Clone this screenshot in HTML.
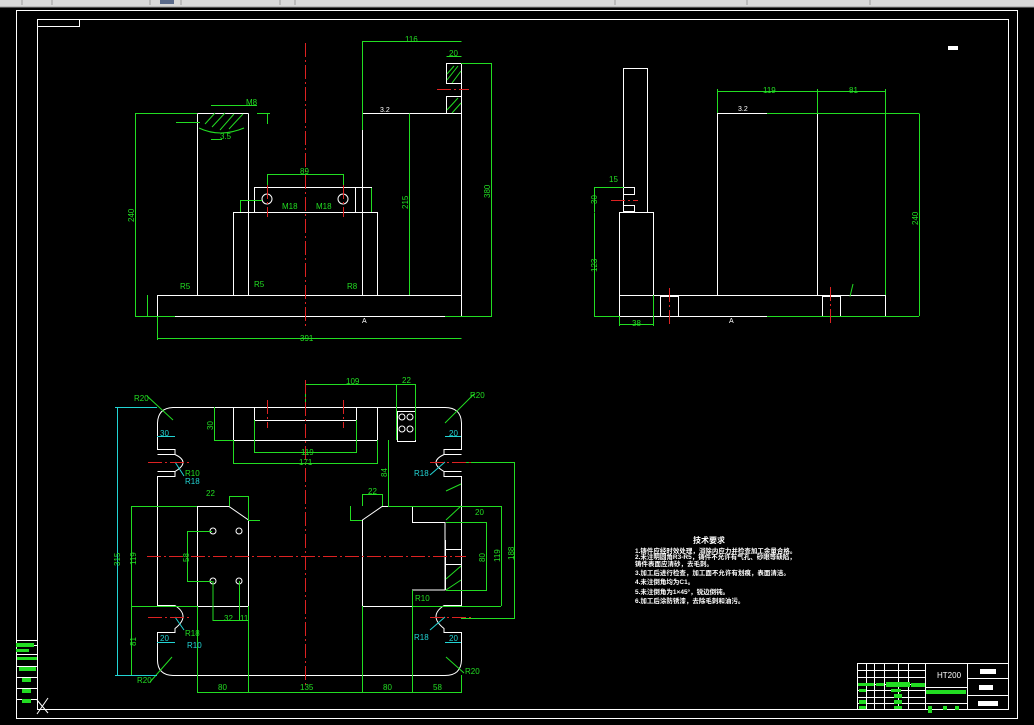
<!DOCTYPE html>
<html><head><meta charset="utf-8"><style>
html,body{margin:0;padding:0;background:#000;width:1034px;height:725px;overflow:hidden}
svg{display:block}
text{font-family:"Liberation Sans","Noto Sans CJK SC",sans-serif}
</style></head><body>
<svg width="1034" height="725" viewBox="0 0 1034 725" xmlns="http://www.w3.org/2000/svg">
<rect x="0" y="0" width="1034" height="7" fill="#d8d8d8"/>
<g stroke="#9a9a9a" stroke-width="1" fill="none">
<line x1="0" y1="7" x2="1034" y2="7"/>
<line x1="22" y1="0" x2="22" y2="5"/><line x1="52" y1="0" x2="52" y2="5"/>
<line x1="150" y1="0" x2="150" y2="5"/><line x1="181" y1="0" x2="181" y2="5"/>
<line x1="280" y1="0" x2="280" y2="5"/><line x1="295" y1="0" x2="295" y2="5"/>
<line x1="615" y1="0" x2="615" y2="5"/><line x1="747" y1="0" x2="747" y2="5"/>
<line x1="870" y1="0" x2="870" y2="5"/>
</g>
<rect x="160" y="0" width="14" height="4" fill="#5a6a8a"/>
<g stroke="#fff" stroke-width="1" fill="none">
<rect x="16.5" y="10.5" width="1001" height="708"/>
<rect x="37.5" y="19.5" width="971" height="690"/>
<rect x="37.5" y="19.5" width="42" height="7"/>
<rect x="157.5" y="295.5" width="304" height="21"/>
<line x1="197.5" y1="113.5" x2="197.5" y2="295"/>
<line x1="248.5" y1="113.5" x2="248.5" y2="295"/>
<line x1="197.5" y1="113.5" x2="248.5" y2="113.5"/>
<rect x="233.5" y="212.5" width="144" height="83"/>
<rect x="254.5" y="187.5" width="117" height="25"/>
<line x1="355.5" y1="187.5" x2="355.5" y2="212.5"/>
<line x1="362.5" y1="113.5" x2="362.5" y2="295"/>
<line x1="362.5" y1="113.5" x2="446.5" y2="113.5"/>
<line x1="461.5" y1="63.5" x2="461.5" y2="295"/>
<rect x="446.5" y="63.5" width="15" height="20"/>
<rect x="446.5" y="96.5" width="15" height="17"/>
<circle cx="267" cy="199" r="5"/><circle cx="343" cy="199" r="5"/>
<rect x="623.5" y="68.5" width="24" height="144"/>
<rect x="619.5" y="212.5" width="34" height="83"/>
<rect x="619.5" y="295.5" width="266" height="21"/>
<rect x="717.5" y="113.5" width="168" height="182"/>
<line x1="817.5" y1="113.5" x2="817.5" y2="295"/>
<rect x="660.5" y="296.5" width="18" height="20"/>
<rect x="822.5" y="296.5" width="18" height="20"/>
<rect x="623.5" y="187.5" width="11" height="7"/><rect x="623.5" y="205.5" width="11" height="6"/>
<path d="M173,407.5 H445 Q461,407.5 461.5,423 V449.5 H444 V454.5 H444 Q428,462 444,471.5 V476.5 H461.5 V605.5 H444 Q428,616 444,628.5 V632.5 H461.5 V660 Q461,675.5 445,675.5 H173 Q157.5,675 157.5,660 V632.5 H175 V628.5 Q191,616 175,605.5 H157.5 V476.5 H175 V471.5 Q191,462 175,454.5 V449.5 H157.5 V423 Q158,408 173,407.5Z"/>
<line x1="157.5" y1="454.5" x2="175" y2="454.5"/><line x1="157.5" y1="471.5" x2="175" y2="471.5"/>
<line x1="444" y1="454.5" x2="461.5" y2="454.5"/><line x1="444" y1="471.5" x2="461.5" y2="471.5"/>
<rect x="233.5" y="407.5" width="144" height="33"/>
<line x1="254.5" y1="420.5" x2="356.5" y2="420.5"/>
<line x1="254.5" y1="407.5" x2="254.5" y2="420.5"/><line x1="356.5" y1="407.5" x2="356.5" y2="420.5"/>
<rect x="397.5" y="411.5" width="18" height="30"/>
<path d="M197.5,506.5 H229 L248.5,520 V606.5 H197.5Z"/>
<path d="M412.5,506.5 H461.5 M412.5,506.5 V522.5 H445 V590 H412.5 V606.5 H362.5 V520 L382,506.5 H412.5"/>
<line x1="445.5" y1="540" x2="445.5" y2="590"/>
<line x1="445" y1="549.5" x2="461" y2="549.5"/><line x1="445" y1="564.5" x2="461" y2="564.5"/>
<circle cx="213" cy="531" r="3"/><circle cx="239" cy="531" r="3"/><circle cx="213" cy="581" r="3"/><circle cx="239" cy="581" r="3"/>
<circle cx="402" cy="417" r="3"/><circle cx="410" cy="417" r="3"/><circle cx="402" cy="429" r="3"/><circle cx="410" cy="429" r="3"/>
<rect x="857.5" y="663.5" width="151" height="46"/>
<line x1="925.5" y1="663.5" x2="925.5" y2="710"/><line x1="967.5" y1="663.5" x2="967.5" y2="710"/>
<line x1="967.5" y1="678.5" x2="1009" y2="678.5"/><line x1="967.5" y1="695.5" x2="1009" y2="695.5"/>
<line x1="925.5" y1="687.5" x2="967.5" y2="687.5"/><line x1="925.5" y1="703.5" x2="967.5" y2="703.5"/>
<line x1="857.5" y1="670.5" x2="925.5" y2="670.5"/><line x1="857.5" y1="677.5" x2="925.5" y2="677.5"/>
<line x1="857.5" y1="684.5" x2="925.5" y2="684.5"/><line x1="857.5" y1="690.5" x2="925.5" y2="690.5"/>
<line x1="857.5" y1="697.5" x2="925.5" y2="697.5"/><line x1="857.5" y1="703.5" x2="925.5" y2="703.5"/>
<line x1="866.5" y1="663.5" x2="866.5" y2="710"/><line x1="874.5" y1="663.5" x2="874.5" y2="710"/>
<line x1="884.5" y1="663.5" x2="884.5" y2="710"/><line x1="898.5" y1="663.5" x2="898.5" y2="710"/>
<line x1="908.5" y1="663.5" x2="908.5" y2="710"/>
<line x1="37.5" y1="640" x2="37.5" y2="710"/>
<line x1="16" y1="640.5" x2="37" y2="640.5"/><line x1="16" y1="645.5" x2="37" y2="645.5"/>
<line x1="16" y1="654.5" x2="37" y2="654.5"/><line x1="16" y1="666.5" x2="37" y2="666.5"/>
<line x1="16" y1="677.5" x2="37" y2="677.5"/><line x1="16" y1="688.5" x2="37" y2="688.5"/>
<line x1="16" y1="699.5" x2="37" y2="699.5"/>
<line x1="37" y1="700" x2="48" y2="713"/><line x1="48" y1="698" x2="37" y2="714"/>
</g>
<g fill="#fff"><rect x="980" y="669" width="16" height="5"/><rect x="979" y="685" width="14" height="5"/><rect x="978" y="701" width="20" height="5"/><rect x="948" y="46" width="10" height="4"/></g>
<g fill="#22dd22">
<rect x="858" y="683" width="8" height="3"/><rect x="866" y="683" width="8" height="3"/><rect x="876" y="683" width="8" height="3"/><rect x="886" y="682" width="24" height="5"/><rect x="911" y="683" width="14" height="4"/>
<rect x="859" y="689" width="7" height="3"/><rect x="891" y="689" width="10" height="3"/><rect x="894" y="694" width="8" height="4"/><rect x="859" y="700" width="7" height="4"/><rect x="894" y="700" width="8" height="4"/><rect x="859" y="706" width="7" height="3"/><rect x="894" y="706" width="8" height="3"/>
<rect x="926" y="690" width="40" height="4"/><rect x="928" y="706" width="4" height="7"/><rect x="943" y="706" width="4" height="4"/><rect x="955" y="706" width="4" height="4"/>
<rect x="16" y="643" width="18" height="4"/><rect x="16" y="649" width="13" height="3"/><rect x="17" y="657" width="20" height="3"/><rect x="19" y="667" width="17" height="4"/><rect x="22" y="678" width="9" height="4"/><rect x="22" y="689" width="9" height="4"/><rect x="22" y="699" width="9" height="4"/>
</g>
<g stroke="#22dd22" stroke-width="1" fill="none">
<path d="M447,80 L458,66 M447,74 L454,66 M452,83 L461,71 M447,110 L458,98 M452,113 L461,103"/>
<path d="M199,128 Q220,138 244,128 M205,124 L215,113 M212,127 L225,113 M220,130 L234,114 M229,129 L243,114"/>
<path d="M446,491 L461,484 M446,520 L461,506 M446,579 L461,566 M446,590 L461,580"/>
</g>
<g stroke="#22dd22" stroke-width="1" fill="none">
<line x1="135.5" y1="113.5" x2="135.5" y2="316"/><line x1="135" y1="113.5" x2="197" y2="113.5"/><line x1="135" y1="316.5" x2="175" y2="316.5"/>
<line x1="147.5" y1="295" x2="147.5" y2="316"/>
<line x1="491.5" y1="63.5" x2="491.5" y2="316"/><line x1="461" y1="63.5" x2="492" y2="63.5"/><line x1="445" y1="316.5" x2="492" y2="316.5"/>
<line x1="409.5" y1="113.5" x2="409.5" y2="295"/>
<line x1="362.5" y1="41.5" x2="461.5" y2="41.5"/><line x1="362.5" y1="41" x2="362.5" y2="130"/>
<line x1="446.5" y1="56.5" x2="461.5" y2="56.5"/>
<line x1="157.5" y1="316" x2="157.5" y2="340"/><line x1="157.5" y1="338.5" x2="461.5" y2="338.5"/>
<line x1="267.5" y1="174.5" x2="343.5" y2="174.5"/><line x1="267.5" y1="174" x2="267.5" y2="190"/><line x1="343.5" y1="174" x2="343.5" y2="190"/>
<line x1="371.5" y1="188" x2="371.5" y2="212"/><line x1="240.5" y1="200" x2="240.5" y2="212"/><line x1="240" y1="200.5" x2="262" y2="200.5"/>
<line x1="211" y1="105.5" x2="257" y2="105.5"/><line x1="257" y1="113.5" x2="270" y2="113.5"/><line x1="176" y1="122.5" x2="200" y2="122.5"/><line x1="267.5" y1="113" x2="267.5" y2="124"/><line x1="211" y1="139.5" x2="222" y2="139.5"/>
<line x1="594.5" y1="212.5" x2="594.5" y2="316"/><line x1="594" y1="316.5" x2="620" y2="316.5"/>
<line x1="594" y1="187.5" x2="624" y2="187.5"/><line x1="594.5" y1="187" x2="594.5" y2="212"/>
<line x1="619.5" y1="316" x2="619.5" y2="326"/><line x1="619.5" y1="324.5" x2="653.5" y2="324.5"/><line x1="653.5" y1="295" x2="653.5" y2="326"/>
<line x1="717.5" y1="89" x2="717.5" y2="113"/><line x1="717.5" y1="91.5" x2="885.5" y2="91.5"/><line x1="817.5" y1="89" x2="817.5" y2="113"/><line x1="885.5" y1="89" x2="885.5" y2="295"/>
<line x1="767" y1="113.5" x2="919" y2="113.5"/><line x1="919.5" y1="113.5" x2="919.5" y2="316"/><line x1="767" y1="316.5" x2="919" y2="316.5"/>
<line x1="850" y1="296.5" x2="853" y2="284"/>
<line x1="305" y1="384.5" x2="415" y2="384.5"/><line x1="305.5" y1="384" x2="305.5" y2="407"/><line x1="396.5" y1="384" x2="396.5" y2="440"/><line x1="415.5" y1="384" x2="415.5" y2="440"/>
<line x1="214.5" y1="407" x2="214.5" y2="440"/><line x1="214" y1="440.5" x2="233" y2="440.5"/>
<line x1="254.5" y1="420" x2="254.5" y2="453"/><line x1="254" y1="452.5" x2="356" y2="452.5"/><line x1="356.5" y1="420" x2="356.5" y2="453"/>
<line x1="233.5" y1="440" x2="233.5" y2="464"/><line x1="233" y1="463.5" x2="377" y2="463.5"/><line x1="377.5" y1="440" x2="377.5" y2="464"/>
<line x1="388.5" y1="440" x2="388.5" y2="506"/>
<line x1="388" y1="506.5" x2="501" y2="506.5"/><line x1="501.5" y1="506" x2="501.5" y2="606"/><line x1="412" y1="606.5" x2="501" y2="606.5"/>
<line x1="446" y1="522.5" x2="487" y2="522.5"/><line x1="486.5" y1="522" x2="486.5" y2="590"/><line x1="446" y1="590.5" x2="487" y2="590.5"/>
<line x1="461" y1="462.5" x2="515" y2="462.5"/><line x1="514.5" y1="462" x2="514.5" y2="619"/><line x1="461" y1="618.5" x2="515" y2="618.5"/>
<line x1="131.5" y1="506" x2="131.5" y2="606"/><line x1="131" y1="506.5" x2="197" y2="506.5"/><line x1="131" y1="606.5" x2="197" y2="606.5"/>
<line x1="131.5" y1="606" x2="131.5" y2="675"/><line x1="131" y1="675.5" x2="157" y2="675.5"/>
<line x1="187.5" y1="531" x2="187.5" y2="581"/><line x1="187" y1="531.5" x2="212" y2="531.5"/><line x1="187" y1="581.5" x2="212" y2="581.5"/>
<line x1="213" y1="581" x2="213" y2="621"/><line x1="213" y1="620.5" x2="248" y2="620.5"/><line x1="239.5" y1="581" x2="239.5" y2="621"/>
<line x1="197.5" y1="606" x2="197.5" y2="693"/><line x1="197" y1="692.5" x2="461" y2="692.5"/><line x1="248.5" y1="606" x2="248.5" y2="693"/><line x1="362.5" y1="606" x2="362.5" y2="693"/><line x1="412.5" y1="590" x2="412.5" y2="693"/><line x1="461.5" y1="675" x2="461.5" y2="693"/>
<line x1="229" y1="496.5" x2="248" y2="496.5"/><line x1="229.5" y1="496" x2="229.5" y2="506"/><line x1="248.5" y1="496" x2="248.5" y2="520"/><line x1="248" y1="520.5" x2="260" y2="520.5"/>
<line x1="362.5" y1="494" x2="362.5" y2="506"/><line x1="362" y1="494.5" x2="382" y2="494.5"/><line x1="382.5" y1="494" x2="382.5" y2="506"/><line x1="350" y1="520.5" x2="362" y2="520.5"/><line x1="350.5" y1="506" x2="350.5" y2="520"/>
<line x1="147" y1="396" x2="173" y2="420"/><line x1="445" y1="423" x2="474" y2="394"/><line x1="150" y1="682" x2="172" y2="657"/><line x1="446" y1="657" x2="464" y2="673"/>
</g>
<g stroke="#22d4d4" stroke-width="1" fill="none">
<line x1="117.5" y1="407.5" x2="117.5" y2="675"/><line x1="115" y1="407.5" x2="157" y2="407.5"/><line x1="115" y1="675.5" x2="157" y2="675.5"/>
<line x1="157" y1="436.5" x2="175" y2="436.5"/><line x1="445" y1="436.5" x2="461" y2="436.5"/><line x1="157" y1="642.5" x2="175" y2="642.5"/><line x1="445" y1="642.5" x2="461" y2="642.5"/>
<line x1="175" y1="462" x2="184" y2="476"/><line x1="175" y1="617" x2="184" y2="630"/><line x1="445" y1="462" x2="430" y2="475"/><line x1="445" y1="617" x2="430" y2="630"/>
</g>
<g stroke="#dd2222" stroke-width="1" fill="none" stroke-dasharray="14,3,2,3">
<line x1="305.5" y1="43" x2="305.5" y2="328"/>
<line x1="305.5" y1="380" x2="305.5" y2="685"/>
<line x1="147" y1="556.5" x2="466" y2="556.5"/>
<line x1="437" y1="89.5" x2="469" y2="89.5"/>
<line x1="611" y1="200.5" x2="638" y2="200.5"/>
<line x1="669.5" y1="288" x2="669.5" y2="324"/><line x1="830.5" y1="287" x2="830.5" y2="324"/>
<line x1="267.5" y1="185" x2="267.5" y2="217"/><line x1="343.5" y1="185" x2="343.5" y2="217"/>
<line x1="148" y1="462.5" x2="190" y2="462.5"/><line x1="148" y1="617.5" x2="190" y2="617.5"/>
<line x1="430" y1="462.5" x2="472" y2="462.5"/><line x1="430" y1="617.5" x2="472" y2="617.5"/>
<line x1="267.5" y1="400" x2="267.5" y2="428"/><line x1="343.5" y1="400" x2="343.5" y2="428"/>
</g>
<g fill="#22dd22" font-size="8">
<text x="405" y="42">116</text><text x="449" y="56">20</text>
<text x="300" y="174">89</text><text x="282" y="209">M18</text><text x="316" y="209">M18</text>
<text x="180" y="289">R5</text><text x="254" y="287">R5</text><text x="347" y="289">R8</text>
<text x="300" y="341">391</text><text x="220" y="139">3.5</text><text x="246" y="105">M8</text>
<text x="609" y="182">15</text><text x="632" y="326">38</text><text x="763" y="93">119</text><text x="849" y="93">81</text>
<text x="346" y="384">109</text><text x="402" y="383">22</text><text x="301" y="455">119</text><text x="299" y="465">171</text>
<text x="134" y="401">R20</text><text x="470" y="398">R20</text><text x="137" y="683">R20</text><text x="465" y="674">R20</text>
<text x="206" y="496">22</text><text x="368" y="494">22</text><text x="475" y="515">20</text>
<text x="218" y="690">80</text><text x="300" y="690">135</text><text x="383" y="690">80</text><text x="433" y="690">58</text>
<text x="224" y="621">32</text><text x="240" y="621">11</text>
<text x="415" y="601">R10</text><text x="185" y="636">R18</text><text x="185" y="476">R10</text>
</g>
<g fill="#22d4d4" font-size="8">
<text x="160" y="436">30</text><text x="449" y="436">20</text><text x="160" y="641">20</text><text x="449" y="641">20</text>
<text x="185" y="484">R18</text><text x="187" y="648">R10</text><text x="414" y="476">R18</text><text x="414" y="640">R18</text>
</g>
<g fill="#22dd22" font-size="8">
<text transform="translate(134,222) rotate(-90)">240</text><text transform="translate(490,198) rotate(-90)">380</text>
<text transform="translate(408,209) rotate(-90)">215</text><text transform="translate(918,225) rotate(-90)">240</text>
<text transform="translate(597,272) rotate(-90)">123</text><text transform="translate(597,204) rotate(-90)">30</text>
<text transform="translate(120,566) rotate(-90)">315</text><text transform="translate(136,565) rotate(-90)">119</text>
<text transform="translate(136,646) rotate(-90)">81</text><text transform="translate(189,562) rotate(-90)">58</text>
<text transform="translate(500,562) rotate(-90)">119</text><text transform="translate(514,560) rotate(-90)">188</text>
<text transform="translate(485,562) rotate(-90)">80</text><text transform="translate(213,430) rotate(-90)">30</text>
<text transform="translate(387,477) rotate(-90)">84</text>
</g>
<g fill="#fff" font-size="7"><text x="380" y="112">3.2</text><text x="738" y="111">3.2</text><text x="362" y="323">A</text><text x="729" y="323">A</text><text x="937" y="678" font-size="8">HT200</text></g>
<g fill="#fff" font-size="6.5" font-weight="bold">
<text x="693" y="543" font-size="8">技术要求</text>
<text x="635" y="553">1.铸件应经时效处理，消除内应力并检查加工余量合格。</text>
<text x="635" y="559">2.未注明圆角R3-R5，铸件不允许有气孔、砂眼等缺陷，</text>
<text x="635" y="566">铸件表面应清砂，去毛刺。</text>
<text x="635" y="575">3.加工后进行检查，加工面不允许有划痕，表面清洁。</text>
<text x="635" y="584">4.未注倒角均为C1。</text>
<text x="635" y="594">5.未注倒角为1×45°，锐边倒钝。</text>
<text x="635" y="603">6.加工后涂防锈漆，去除毛刺和油污。</text>
</g>
</svg>
</body></html>
